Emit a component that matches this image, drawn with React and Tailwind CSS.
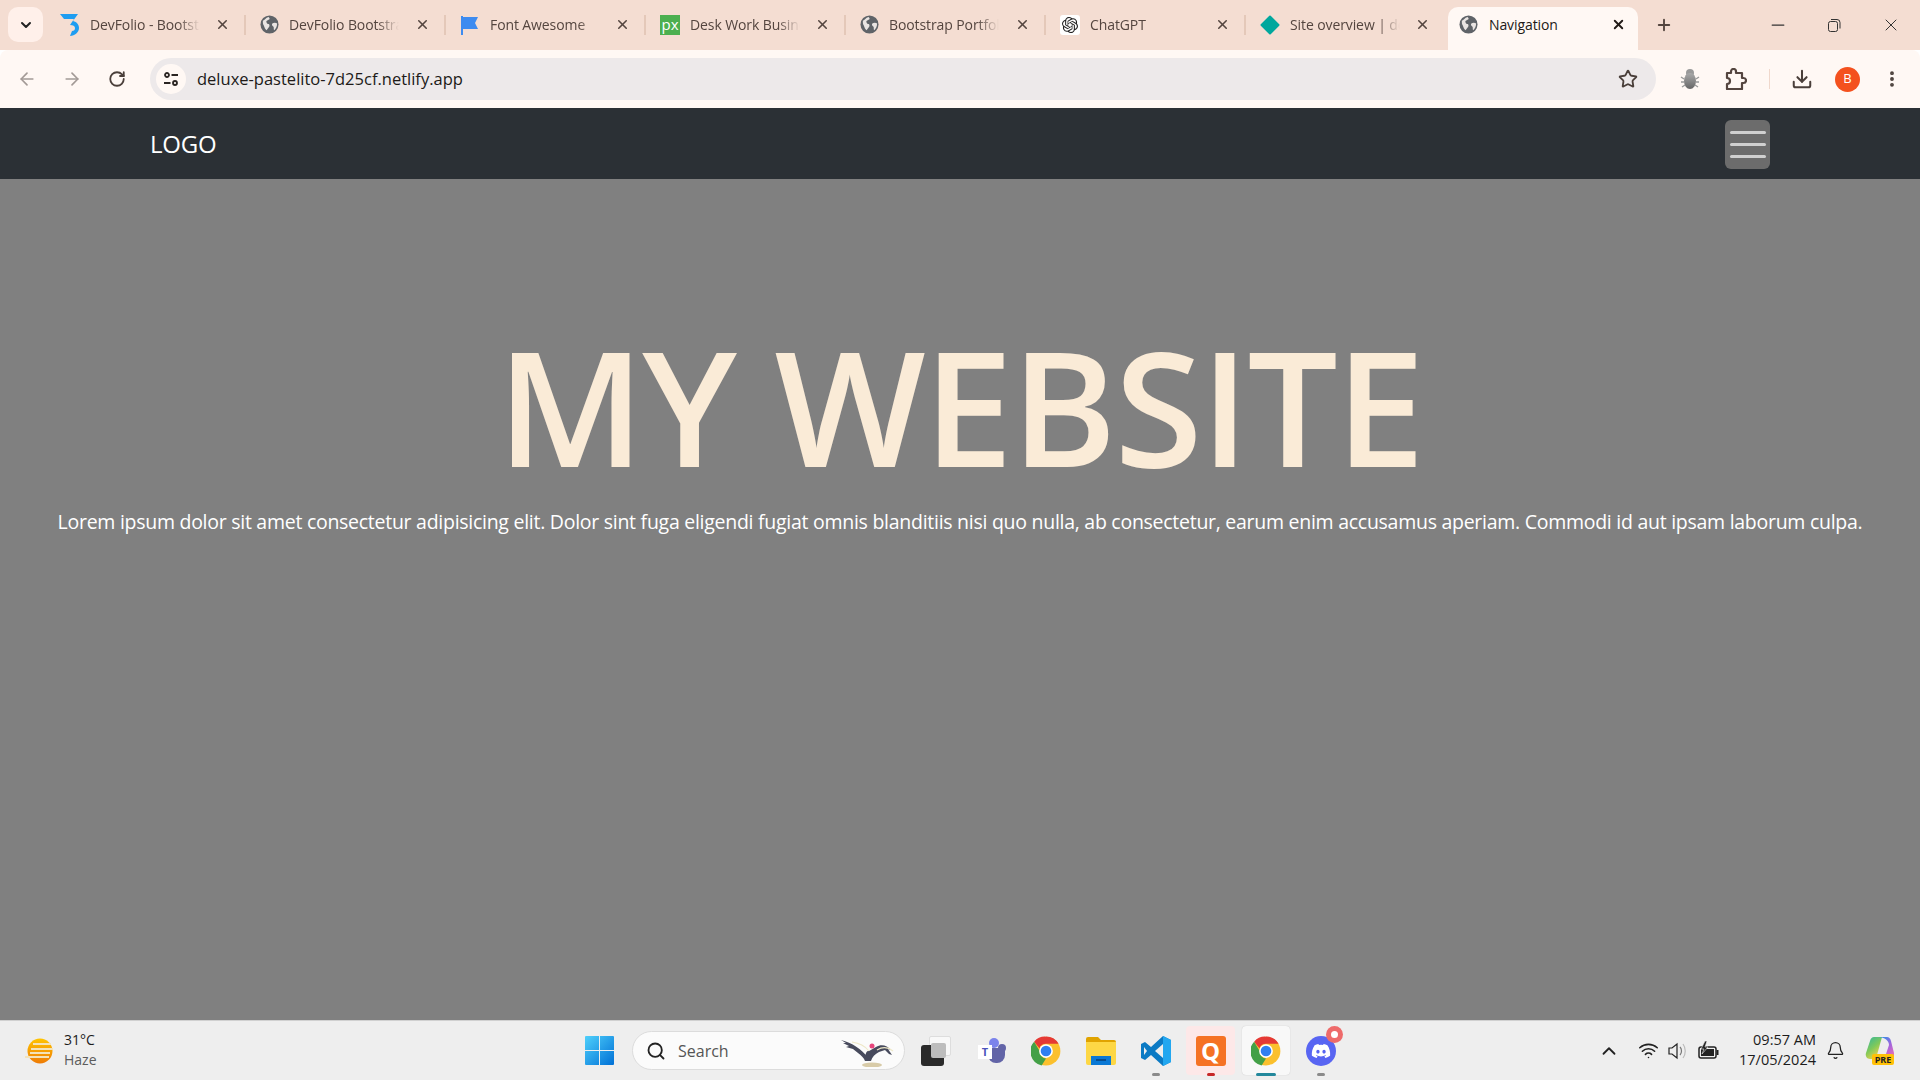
import React from 'react';
import { ArrowLeft, ArrowRight, RotateCw, Star, Download, EllipsisVertical, X, Plus, Minus, ChevronUp, ChevronDown, Bell, Search, Wifi } from 'lucide-react';
import { SiOpenai } from 'react-icons/si';
import { FaDiscord } from 'react-icons/fa';

const Globe = () => (
  <svg width="19" height="19" viewBox="0 0 20 20" className="shrink-0">
    <circle cx="10" cy="10" r="9.5" fill="#5f6368" />
    <path d="M3 6c2-1 3-3 6-4 1 1 2 2 0 3-1 1-3 1-2 3 0 2 3 1 3 3 0 2-2 3-3 5-2-1-2-3-3-5-1-1-1-3-1-5zM13 9c1-1 4-1 5 0 0 3-1 5-3 7-1-1 0-3-1-4-1 0-2-2-1-3z" fill="#e9e4e2" />
  </svg>
);

const DevfolioIcon = () => (
  <svg width="20" height="24" viewBox="0 0 20 24" className="shrink-0">
    <path d="M0 1h18l-5 7c4 1 6 4 6 7 0 4-4 8-9 8l2-5c2 0 3-1 3-3s-2-3-5-3l4-6H4z" fill="#1e9df1" />
  </svg>
);

const FlagIcon = () => (
  <svg width="20" height="20" viewBox="0 0 20 20" className="shrink-0">
    <path d="M1 1h2v1h15l-3 6 3 6H3v6H1z" fill="#3d8bf0" />
  </svg>
);

const PxIcon = () => (
  <div className="w-5 h-5 shrink-0 bg-[#4caf50] text-white text-[15px] leading-[18px] text-center overflow-hidden">px</div>
);

const GptIcon = () => (
  <div className="w-5 h-5 shrink-0 bg-white rounded-[3px] flex items-center justify-center">
    <SiOpenai size={16} color="#222" />
  </div>
);

const DiamondIcon = () => (
  <div className="w-5 h-5 shrink-0 flex items-center justify-center">
    <div className="w-[14px] h-[14px] bg-[#00a79d] rotate-45 rounded-[1px]" />
  </div>
);

const tabs = [
  { title: 'DevFolio - Bootstrap Portfolio', icon: <DevfolioIcon /> },
  { title: 'DevFolio Bootstrap Portfolio', icon: <Globe /> },
  { title: 'Font Awesome', icon: <FlagIcon /> },
  { title: 'Desk Work Business', icon: <PxIcon /> },
  { title: 'Bootstrap Portfolio', icon: <Globe /> },
  { title: 'ChatGPT', icon: <GptIcon /> },
  { title: 'Site overview | deluxe', icon: <DiamondIcon /> },
];

const Tab = ({ tab, last }) => (
  <div className="w-[200px] h-[35px] shrink-0 flex items-center pl-[14px] relative">
    {tab.icon}
    <div className="ml-[10px] w-[110px] text-[14px] tracking-[-0.1px] text-[#54453f] whitespace-nowrap overflow-hidden [mask-image:linear-gradient(to_right,black_80%,transparent)]">
      {tab.title}
    </div>
    <X size={15} strokeWidth={2.5} color="#54453f" className="absolute left-[169px]" />
    {!last && <div className="absolute right-0 top-[8px] w-[2px] h-[20px] bg-[#e4c8b9]" />}
  </div>
);

const TabStrip = () => (
  <div className="h-[50px] bg-[#f4ddd2] flex items-end shrink-0 pl-[8px]">
    <div className="w-[35px] h-[35px] mb-[8px] bg-[#fff0ea] rounded-[10px] flex items-center justify-center shrink-0">
      <ChevronDown size={16} strokeWidth={3} color="#222" />
    </div>
    <div className="flex items-start ml-[3px] h-[35px] mb-[8px]">
      {tabs.map((tab, i) => (
        <Tab key={i} tab={tab} last={i === tabs.length - 1} />
      ))}
    </div>
    <div className="ml-[2px] w-[190px] h-[43px] bg-[#fff8f4] rounded-t-[10px] flex items-center pl-[11px] pb-[8px] relative shrink-0">
      <Globe />
      <span className="ml-[11px] text-[14px] tracking-[-0.1px] text-[#221a17]">Navigation</span>
      <X size={15} strokeWidth={3} color="#221a17" className="absolute left-[163px]" />
    </div>
    <div className="h-[35px] mb-[8px] flex items-center ml-[17px]">
      <Plus size={18} strokeWidth={2.5} color="#54453f" />
    </div>
    <div className="h-[50px] flex items-center ml-auto pb-[1px]">
      <Minus size={20} strokeWidth={1.5} color="#333" className="mr-[39px]" />
      <svg width="14" height="14" viewBox="0 0 14 14" fill="none" stroke="#333" className="mr-[40px]">
        <rect x="1.5" y="3.5" width="9" height="10" rx="2" />
        <path d="M4 1.5h6a3 3 0 0 1 3 3v6" />
      </svg>
      <X size={20} strokeWidth={1.2} color="#333" className="mr-[19px]" />
    </div>
  </div>
);

const BugIcon = () => (
  <svg width="20" height="22" viewBox="0 0 20 22">
    <defs>
      <linearGradient id="bug" x1="0" y1="0" x2="0" y2="1">
        <stop offset="0" stopColor="#aaa" />
        <stop offset="1" stopColor="#666" />
      </linearGradient>
    </defs>
    <path d="M1 9l3 2M1 14h3M2 19l3-2M19 9l-3 2M19 14h-3M18 19l-3-2" stroke="#999" strokeWidth="1.4" />
    <circle cx="10" cy="5" r="4" fill="#999" />
    <ellipse cx="10" cy="13" rx="6" ry="8" fill="url(#bug)" />
  </svg>
);

const PuzzleIcon = () => (
  <svg width="22" height="22" viewBox="0 0 22 22" fill="none" stroke="#54453f" strokeWidth="2.2" strokeLinejoin="round">
    <path d="M2 5h4V3.5a2.5 2.5 0 0 1 5 0V5h6v5h1.5a2 2 0 0 1 0 5H17v6H2v-5a2.5 2.5 0 0 0 0-6z" />
  </svg>
);

const Toolbar = () => (
  <div className="h-[58px] bg-[#fff8f4] rounded-t-[8px] flex items-center shrink-0">
    <ArrowLeft size={20} strokeWidth={2} color="#a39a96" className="ml-[17px]" />
    <ArrowRight size={20} strokeWidth={2} color="#a39a96" className="ml-[25px]" />
    <RotateCw size={18} strokeWidth={2.4} color="#4a3f3a" className="ml-[26px]" />
    <div className="ml-[24px] w-[1506px] h-[42px] bg-[#ede9ea] rounded-full flex items-center pl-[6px]">
      <div className="w-[30px] h-[30px] bg-[#fff8f4] rounded-full flex items-center justify-center">
        <svg width="16" height="16" viewBox="0 0 16 16" fill="none" stroke="#2a2422" strokeWidth="1.8">
          <circle cx="4" cy="4" r="2" />
          <path d="M8.5 4H15M1 12h6.5" />
          <circle cx="12" cy="12" r="2" />
        </svg>
      </div>
      <span className="ml-[11px] text-[16.5px] text-[#201a18]">deluxe-pastelito-7d25cf.netlify.app</span>
      <Star size={20} strokeWidth={2.2} color="#4a3f3a" className="ml-auto mr-[18px]" />
    </div>
    <div className="ml-[24px]"><BugIcon /></div>
    <div className="ml-[25px]"><PuzzleIcon /></div>
    <div className="ml-[22px] w-px h-[20px] bg-[#f0d8cc]" />
    <Download size={22} strokeWidth={2.2} color="#4a3f3a" className="ml-[21px]" />
    <div className="ml-[22px] w-[25px] h-[25px] bg-[#f4511e] rounded-full text-white text-[13px] flex items-center justify-center">B</div>
    <EllipsisVertical size={20} strokeWidth={2.6} color="#4a3f3a" className="ml-[22px]" />
  </div>
);

const Navbar = () => (
  <nav className="h-[71px] bg-[#2b3035] flex items-center justify-between pl-[150px] pr-[150px] shrink-0">
    <span className="text-[24px] tracking-[-0.2px] text-white">LOGO</span>
    <button className="w-[45px] h-[49px] mt-[2px] bg-[#6c6c6c] rounded-[6px] flex flex-col items-center justify-center gap-[9px]">
      <span className="w-[36px] h-[3px] bg-[#cfcfcf] rounded-sm" />
      <span className="w-[36px] h-[3px] bg-[#cfcfcf] rounded-sm" />
      <span className="w-[36px] h-[3px] bg-[#cfcfcf] rounded-sm" />
    </button>
  </nav>
);

const Hero = () => (
  <main className="flex-1 bg-[#808080] flex flex-col items-center pt-[130px]">
    <h1 className="text-[160px] leading-[192px] font-semibold text-[#faebd7] tracking-[-2px] whitespace-nowrap">MY WEBSITE</h1>
    <p className="mt-[6px] text-[19.5px] leading-[30px] text-white whitespace-nowrap tracking-[-0.27px]">
      Lorem ipsum dolor sit amet consectetur adipisicing elit. Dolor sint fuga eligendi fugiat omnis blanditiis nisi quo nulla, ab consectetur, earum enim accusamus aperiam. Commodi id aut ipsam laborum culpa.
    </p>
  </main>
);

const ChromeIcon = () => (
  <svg width="30" height="30" viewBox="0 0 48 48">
    <circle cx="24" cy="24" r="23" fill="#fbc02d" />
    <path d="M24 1a23 23 0 0 1 20 11.5H24a11.5 11.5 0 0 0-10.5 7L5 9a23 23 0 0 1 19-8z" fill="#e53935" />
    <path d="M5 9l9 15.5a11 11 0 0 0 10 11.5l-7 11A23 23 0 0 1 5 9z" fill="#43a047" />
    <circle cx="24" cy="24" r="11" fill="#fff" />
    <circle cx="24" cy="24" r="8.5" fill="#2f7ff0" />
  </svg>
);

const TaskSlot = ({ children, dot, className = '' }) => (
  <div className={`h-[49px] flex items-center justify-center relative shrink-0 ${className}`}>
    {children}
    {dot && <div className={`absolute -bottom-[1px] h-[3px] rounded-full ${dot}`} />}
  </div>
);

const WeatherIcon = () => (
  <svg width="28" height="26" viewBox="0 0 28 26">
    <defs>
      <linearGradient id="sun" x1="0" y1="0" x2="0" y2="1">
        <stop offset="0" stopColor="#ffc400" />
        <stop offset="1" stopColor="#ee7b06" />
      </linearGradient>
    </defs>
    <circle cx="15" cy="13" r="12.5" fill="url(#sun)" />
    <path d="M8 6h18M6 11h22M0 19h24" stroke="#f4e3b8" strokeWidth="2" />
    <path d="M5 15h20" stroke="#f4e3b8" strokeWidth="2" />
  </svg>
);

const CopilotIcon = () => (
  <svg width="29" height="24" viewBox="0 0 29 24">
    <defs>
      <linearGradient id="copL" x1="0" y1="0" x2="0.6" y2="1">
        <stop offset="0" stopColor="#2fb5a0" />
        <stop offset="0.55" stopColor="#7fc95a" />
        <stop offset="1" stopColor="#f2d34a" />
      </linearGradient>
      <linearGradient id="copR" x1="0.2" y1="0" x2="0.8" y2="1">
        <stop offset="0" stopColor="#2f8fe8" />
        <stop offset="0.5" stopColor="#a464dc" />
        <stop offset="1" stopColor="#ee6fb4" />
      </linearGradient>
    </defs>
    <path d="M9 1h8l-5 18c-1 3-2 4-5 4H5c-3 0-5-3-4-6L5 5c1-3 2-4 4-4z" fill="url(#copL)" />
    <path d="M13 1h9c2 0 3 1 4 4l3 12c1 3-1 6-4 6h-9c3 0 4-2 5-5l3-9c0-4-4-8-11-8z" fill="url(#copR)" />
  </svg>
);

const Taskbar = () => (
  <footer className="h-[60px] bg-[#eeeeee] border-t border-[#d0d0d0] flex items-center relative shrink-0">
    <div className="flex items-center pl-[25px] w-[585px] shrink-0">
      <WeatherIcon />
      <div className="ml-[11px] text-[14px] leading-[20px] -mt-[2px]">
        <div className="text-[#1c1c1c]">31°C</div>
        <div className="text-[#5c5c5c]">Haze</div>
      </div>
    </div>
    <svg width="29" height="29" viewBox="0 0 29 29" className="shrink-0">
      <defs>
        <linearGradient id="win" x1="0" y1="0" x2="1" y2="1">
          <stop offset="0" stopColor="#4fd0fb" />
          <stop offset="1" stopColor="#0070d6" />
        </linearGradient>
      </defs>
      <path d="M0 1a1 1 0 0 1 1-1h13v14H0zM15 0h13a1 1 0 0 1 1 1v13H15zM0 15h14v14H1a1 1 0 0 1-1-1zM15 15h14v13a1 1 0 0 1-1 1H15z" fill="url(#win)" />
    </svg>
    <div className="ml-[18px] w-[273px] h-[39px] bg-[#fbfbfb] border border-[#dcdcdc] rounded-full flex items-center pl-[13px] relative shrink-0">
      <Search size={20} strokeWidth={2.2} color="#222" />
      <span className="ml-[12px] text-[16px] text-[#555]">Search</span>
      <svg width="60" height="32" viewBox="0 0 60 32" className="absolute right-[4px] top-[3px]">
        <ellipse cx="32" cy="30" rx="10" ry="2.5" fill="#d8cba8" />
        <path d="M27 22C22 14 12 8 1 5l5 3-3 0 6 3-3 1 7 2 5 4c3 2 6 5 7 8h6c1-4 4-7 8-9l6-2 4 4 3 1-4-6 3 1c-4-5-10-6-15-3-4 2-6 4-8 4-2 0-2 4-3 4z" fill="#474a5c" />
        <path d="M12 7c7 1 13 4 17 9M37 15c5-3 11-3 16 1" stroke="#eee8c8" strokeWidth="1.2" fill="none" />
        <circle cx="32" cy="11" r="2.5" fill="#e7457c" />
      </svg>
    </div>
    <div className="ml-[16px] w-[30px] h-[30px] relative shrink-0">
      <div className="absolute right-0 top-0 w-[22px] h-[20px] bg-[#f8f8f8] border border-[#dddddd] rounded-[2px]" />
      <div className="absolute left-0 bottom-0 w-[23px] h-[21px] bg-[#2a2a2a] rounded-[3px]" />
      <div className="absolute right-[5px] top-[7px] w-[15px] h-[15px] bg-[#bdbdbd] rounded-[2px]" />
    </div>
    <TaskSlot className="w-[30px] ml-[26px]">
      <div className="w-[28px] h-[26px] relative">
        <div className="absolute right-0 top-[6px] w-[8px] h-[8px] rounded-full bg-[#6264a7]" />
        <div className="absolute left-[11px] top-0 w-[10px] h-[10px] rounded-full bg-[#7b83eb]" />
        <div className="absolute left-[10px] top-[10px] w-[17px] h-[15px] rounded-b-[8px] bg-[#6264a7]" />
        <div className="absolute left-0 top-[7px] w-[14px] h-[14px] bg-white text-[#4b53bc] text-[11px] font-bold leading-[14px] text-center">T</div>
      </div>
    </TaskSlot>
    <TaskSlot className="w-[30px] ml-[24px]"><ChromeIcon /></TaskSlot>
    <TaskSlot className="w-[30px] ml-[25px]">
      <svg width="30" height="28" viewBox="0 0 30 28">
        <path d="M0 2a2 2 0 0 1 2-2h10l3 3h13a2 2 0 0 1 2 2v4H0z" fill="#e0a300" />
        <path d="M0 5h30v21a2 2 0 0 1-2 2H2a2 2 0 0 1-2-2z" fill="#fdd745" />
        <path d="M5 19h20v9H5z" fill="#0a78d4" />
        <path d="M10 23h10" stroke="#063f7a" strokeWidth="1.5" />
      </svg>
    </TaskSlot>
    <TaskSlot className="w-[30px] ml-[25px]" dot="w-[8px] bg-[#8a8a8a]">
      <svg width="30" height="30" viewBox="0 0 30 30">
        <path d="M22 0l8 4v22l-8 4-12-11-6 5-4-2V8l4-2 6 5z" fill="#0b7ac4" />
        <path d="M22 0l8 4v22l-8 4z" fill="#22a7f0" />
        <path d="M22 8l-8 7 8 7z" fill="#eeeeee" />
        <path d="M3 11l3 4-3 4z" fill="#eeeeee" />
      </svg>
    </TaskSlot>
    <TaskSlot className="w-[49px] ml-[15px] bg-[#fde8e8] rounded-[4px]" dot="w-[8px] bg-[#c62828]">
      <div className="w-[30px] h-[30px] bg-[#f57224] rounded-[3px] text-white text-[24px] font-bold leading-[30px] text-center">Q</div>
    </TaskSlot>
    <TaskSlot className="w-[48px] ml-[7px] bg-[#f8f8f8] rounded-[4px] shadow-[0_0_1px_#bbb]" dot="w-[20px] bg-[#23889c]">
      <ChromeIcon />
    </TaskSlot>
    <TaskSlot className="w-[30px] ml-[16px]" dot="w-[8px] bg-[#8a8a8a]">
      <div className="w-[30px] h-[30px] bg-[#5865f2] rounded-full flex items-center justify-center">
        <FaDiscord size={20} color="white" />
      </div>
      <div className="absolute top-0 -right-[7px] w-[17px] h-[17px] bg-[#ee6a6a] rounded-full flex items-center justify-center">
        <div className="w-[7px] h-[7px] bg-white rounded-full" />
      </div>
    </TaskSlot>
    <div className="ml-auto flex items-center pr-[25px]">
      <ChevronUp size={22} strokeWidth={2} color="#222" />
      <Wifi size={21} strokeWidth={1.8} color="#222" className="ml-[18px]" />
      <svg width="20" height="20" viewBox="0 0 20 20" fill="none" stroke="#222" strokeWidth="1.2" className="ml-[9px]">
        <path d="M1 7h3l5-4v14l-5-4H1z" />
        <path d="M12 6c2 2 2 6 0 8" stroke="#777" />
        <path d="M15 3c3 4 3 10 0 14" stroke="#bbb" />
      </svg>
      <svg width="21" height="20" viewBox="0 0 21 20" className="ml-[10px]">
        <rect x="1" y="6" width="17" height="11" rx="2" fill="none" stroke="#222" strokeWidth="1.5" />
        <rect x="3" y="8" width="13" height="7" fill="#222" />
        <rect x="18.5" y="9" width="2" height="5" fill="#222" />
        <path d="M7 0L3 8h3l-2 5 6-7H7l2-6z" fill="#222" stroke="#eee" strokeWidth="0.6" />
      </svg>
      <div className="ml-[17px] w-[80px] text-right text-[14.5px] leading-[20px] text-[#1c1c1c] whitespace-nowrap -mt-[2px]">
        <div>09:57 AM</div>
        <div>17/05/2024</div>
      </div>
      <Bell size={19} strokeWidth={1.6} color="#222" className="ml-[10px]" />
      <div className="ml-[20px] w-[30px] h-[29px] relative">
        <CopilotIcon />
        <div className="absolute left-[7px] bottom-0 w-[22px] h-[11px] bg-[#ffc107] rounded-[2px] text-[9px] font-bold leading-[11px] text-center text-[#222]">PRE</div>
      </div>
    </div>
  </footer>
);

const App = () => (
  <div className="w-[1920px] h-[1080px] flex flex-col overflow-hidden font-['Open_Sans','Noto_Sans',sans-serif]">
    <TabStrip />
    <Toolbar />
    <Navbar />
    <Hero />
    <Taskbar />
  </div>
);

export default App;
